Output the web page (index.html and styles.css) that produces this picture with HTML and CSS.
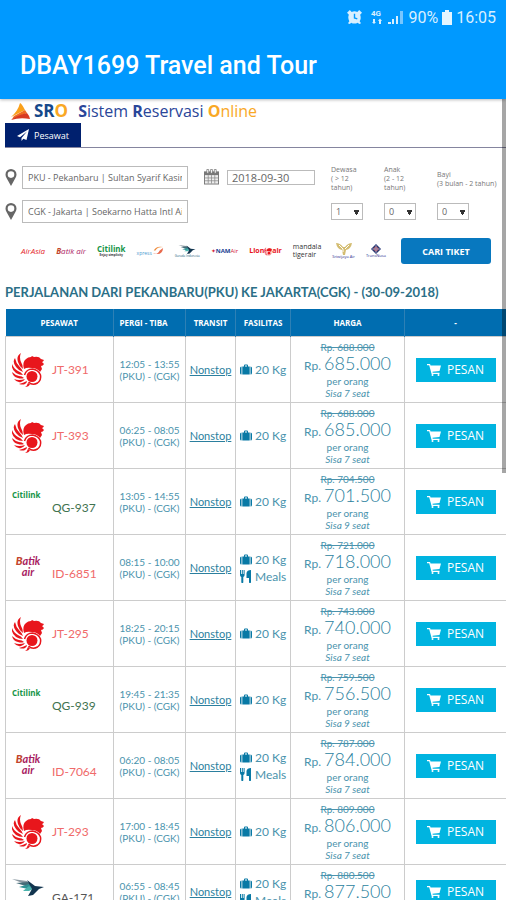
FILE: index.html
```html
<!DOCTYPE html>
<html lang="id">
<head>
  <meta charset="UTF-8">
  <meta name="viewport" content="width=device-width, initial-scale=1">
  <title>DBAY1699 Travel and Tour</title>
  <link rel="stylesheet" href="styles.css">
</head>
<body>
  <svg class="sprite" aria-hidden="true">
    <symbol id="plane" viewBox="0 0 12 12"><path d="M12 0L0 7l3 1.300L10 2.500 4.500 9v3l1.800-2.300L9.500 11z"/></symbol>
    <symbol id="pin" viewBox="0 0 12 17"><path fill-rule="evenodd" d="M6 0a5.500 5.500 0 0 0-5.500 5.500C.5 8 2 9.500 3.500 12.500L6 17l2.500-4.500C10 9.500 11.500 8 11.500 5.500A5.500 5.500 0 0 0 6 0zM6 2.300a3.300 3.300 0 1 1 0 6.600 3.300 3.300 0 0 1 0-6.600z"/></symbol>
    <symbol id="bag" viewBox="0 0 12 10"><path d="M0 3.500Q0 2 1.500 2v8Q0 10 0 8.500zM2.300 2H4V1q0-1 1-1h2q1 0 1 1v1h1.700v8H2.300zM5 1v1h2V1zM10.500 2Q12 2 12 3.500v5q0 1.500-1.500 1.500z"/></symbol>
    <symbol id="meal" viewBox="0 0 12 13"><path d="M0 0h1v4h.8V0h1v4h.8V0h1v5Q4.600 6.500 3.300 7v5.500q-1 1-2 0V7Q0 6.500 0 5zM11 0v12.500q-1 1-2 0V8H6.500V3Q7 0 11 0z"/></symbol>
    <symbol id="cart" viewBox="0 0 14 12"><path d="M0 0h3l.6 1.600H14L12.500 7 5.500 7.800l.2.900h6.800v1.200H4.600L2.200 1.300H0z"/><circle cx="5.500" cy="11" r="1"/><circle cx="11.500" cy="11" r="1"/></symbol>
    <symbol id="lion" viewBox="0 0 32 34">
      <path d="M9 0Q4 3 6 9q1 4 5 7 0-4-2-7-2-5 0-9zM3 5Q0 9 4 14q3 4 7 5-1-3-4-6-3-3-4-8zM0 11q-1 5 4 9 3 2 7 2-2-3-5-4-4-2-6-7zM0 19q1 5 6 6 3 1 6 0-2-2-5-2-4-1-7-4zM2 26q3 4 7 3 3-1 4-3-6 2-11 0zM7 31q4 1 6 0 2-1 2-3-4 2-8 3zM13 34q4 0 5-3l-2-1q-1 3-3 4z"/>
      <path d="M12 16q-2-7 2-10 2-2 5-2l1-1 2 1q5-1 7 2l3 1q-1 2-2 2l2 2q-1 2-3 2l1 3-2 3q-3-4-8-4-5-1-8 1z"/>
      <circle cx="20" cy="23.500" r="5.500"/>
      <path fill="none" stroke="#e8161c" stroke-width="1.500" d="M12.500 22q2-6 8-6 6 1 8 6 1 5-3 8-5 3-9-1"/>
    </symbol>
    <symbol id="garuda" viewBox="0 0 32 17">
      <path fill="#8c9aa3" d="M0 0l15 2 5 4-2 1z"/><path fill="#456c78" d="M4 4l12-1 4 4-3 1z"/><path fill="#2f9295" d="M7 8l10-3 3 4-4 1z"/><path fill="#49b3ad" d="M11 12l6-5 4 3-4 2z"/><path fill="#12354f" d="M15 1l8 6 9 1-5 2-6 6-5 1 4-7z"/>
    </symbol>
  </svg>

  <div class="screen">
    <header class="app-bar">
      <div class="status">
        <svg class="alarm" viewBox="0 0 16 16"><path d="M0 3l3-3 2 2q3-1.500 6 0l2-2 3 3-2 2q1.500 4-.5 7l1.500 2-2 1-1.500-1.500q-4 2-7 0L3 15l-2-1 1.500-2Q.5 8 2 5z" fill="#d8efff"/><path d="M8 4v4.500l3 1" fill="none" stroke="#0099ff" stroke-width="1.500"/></svg>
        <svg class="network" viewBox="0 0 14 16"><text x="1" y="7">4G</text><path d="M3 10h2v3H3zM2 13h4l-2 2zM8 12h4l-2-2.500zM9 12h2v3H9z" fill="#d8efff"/></svg>
        <svg class="signal" viewBox="0 0 16 14"><path d="M0 12h3v2H0zM4 9h2v5H4zM8 6h2v8H8z" fill="#d8efff"/><path d="M12 1h3v13h-3z" fill="#77c7ff"/></svg>
        <span>90%</span>
        <svg class="battery" viewBox="0 0 10 15"><path d="M3 0h4v2h3v13H0V2h3z" fill="#e5f5ff"/></svg>
        <span>16:05</span>
      </div>
      <h1>DBAY1699 Travel and Tour</h1>
    </header>

    <main>
      <div class="brand">
        <svg class="brand-mark" viewBox="0 0 19 17"><path fill="#f9a01b" d="M9 0q2 1 5 7L0 14Q7 8 9 0z"/><path fill="#ef6b22" d="M14 7l2 3L1 16l2-3z"/><path fill="#d83a23" d="M16 10q2 2 3 6Q9 14 0 17q4-4 16-7z"/></svg>
        <span class="sro">SR<i>O</i></span>
        <span class="slogan"><b>S</b>istem <b>R</b>eservasi <em><b>O</b>nline</em></span>
      </div>
      <nav class="tabs"><a href="#"><svg><use href="#plane"/></svg>Pesawat</a></nav>

      <form class="search">
        <div class="places">
          <div class="place"><svg><use href="#pin"/></svg><input type="text" aria-label="Asal" value="PKU - Pekanbaru | Sultan Syarif Kasim II"></div>
          <div class="place"><svg><use href="#pin"/></svg><input type="text" aria-label="Tujuan" value="CGK - Jakarta | Soekarno Hatta Intl Airport"></div>
        </div>
        <div class="date">
          <svg viewBox="0 0 16 16"><path d="M0 2h16v14H0z" fill="#777"/><path d="M1 6h14v9H1z" fill="#eee"/><path d="M3 0h2v4H3zM7 0h2v4H7zM11 0h2v4h-2z" fill="#fff" stroke="#666" stroke-width=".7"/><path d="M1 9h14M1 12h14M4.500 6v9M8 6v9M11.500 6v9" stroke="#888" stroke-width=".8"/></svg>
          <input type="text" aria-label="Tanggal" value="2018-09-30">
        </div>
        <div class="guests">
          <div class="guest"><label for="adult"><span>Dewasa<br>( &gt; 12<br>tahun)</span></label><select id="adult"><option>1</option><option>2</option></select></div>
          <div class="guest"><label for="child"><span>Anak<br>(2 - 12<br>tahun)</span></label><select id="child"><option>0</option><option>1</option></select></div>
          <div class="guest"><label for="infant"><span>Bayi<br>(3 bulan - 2 tahun)</span></label><select id="infant"><option>0</option><option>1</option></select></div>
        </div>
      </form>

      <div class="partners">
        <div class="airlines">
          <span class="air-asia">AirAsia</span>
          <span class="air-batik"><b>B</b>atik air</span>
          <span class="air-citilink">Citilink<small>Enjoy simplicity</small></span>
          <span class="air-xpress">xpress<svg viewBox="0 0 14 10"><path d="M2 5Q5-1 13 1 6 1 4 5z" fill="#ef8b3b"/><path d="M1 8q5 3 8-3l4-3q-1 8-8 7z" fill="#e86a4d"/></svg></span>
          <span class="air-garuda"><svg><use href="#garuda"/></svg><small>Garuda Indonesia</small></span>
          <span class="air-nam">✦<b>NAM</b>Air</span>
          <span class="air-lion">Lion<svg><use href="#lion"/></svg>air</span>
          <span class="air-mandala">mandala<br>tigerair</span>
          <span class="air-sriwijaya"><svg viewBox="0 0 16 12"><path d="M0 0q4 0 7 4h2q3-4 7-4-1 6-6 7l-1 5H7L6 7Q1 6 0 0z" fill="#d4bd72"/><path d="M3 2l4 4v3M13 2L9 6" stroke="#fff" fill="none"/></svg><small>Sriwijaya Air</small></span>
          <span class="air-nusa"><svg viewBox="0 0 10 10"><path d="M5 0l5 5-5 5-5-5z" fill="#25356f"/><path d="M5 2l3 3-3 3-3-3z" fill="#d96262"/><path d="M5 0v10M0 5h10" stroke="#8790b8"/></svg><small>TransNusa</small></span>
        </div>
        <button type="button" class="find">CARI TIKET</button>
      </div>

      <h2>PERJALANAN DARI PEKANBARU(PKU) KE JAKARTA(CGK) - (30-09-2018)</h2>

      <table>
        <colgroup><col class="c-plane"><col class="c-time"><col class="c-transit"><col class="c-extra"><col class="c-price"><col class="c-book"></colgroup>
        <thead>
          <tr><th>PESAWAT</th><th class="th-time">PERGI - TIBA</th><th>TRANSIT</th><th>FASILITAS</th><th>HARGA</th><th>-</th></tr>
        </thead>
        <tbody id="flights"></tbody>
      </table>
    </main>
    <div class="scrollbar"></div>
  </div>

  <script>
    const flights = [
      ['lion', 'JT-391', '12:05 - 13:55', false, '688.000', '685.000', 7],
      ['lion', 'JT-393', '06:25 - 08:05', false, '688.000', '685.000', 7],
      ['citilink', 'QG-937', '13:05 - 14:55', false, '704.500', '701.500', 9],
      ['batik', 'ID-6851', '08:15 - 10:00', true, '721.000', '718.000', 7],
      ['lion', 'JT-295', '18:25 - 20:15', false, '743.000', '740.000', 7],
      ['citilink', 'QG-939', '19:45 - 21:35', false, '759.500', '756.500', 9],
      ['batik', 'ID-7064', '06:20 - 08:05', true, '787.000', '784.000', 7],
      ['lion', 'JT-293', '17:00 - 18:45', false, '809.000', '806.000', 7],
      ['garuda', 'GA-171', '06:55 - 08:45', true, '880.500', '877.500', 0]
    ];

    const logos = {
      lion: '<svg><use href="#lion"/></svg>',
      garuda: '<svg><use href="#garuda"/></svg>',
      citilink: 'Citilink',
      batik: '<b>B</b>atik<br>air'
    };

    document.getElementById('flights').innerHTML = flights.map(([line, code, time, meals, old, price, seats]) => `
      <tr>
        <td><div class="flight ${line}"><span class="logo">${logos[line]}</span><span class="code">${code}</span></div></td>
        <td class="time">${time}<br>(PKU) - (CGK)</td>
        <td class="transit"><a href="#">Nonstop</a></td>
        <td class="extra"><div><svg><use href="#bag"/></svg>20 Kg</div>${meals ? '<div><svg><use href="#meal"/></svg>Meals</div>' : ''}</td>
        <td class="price"><s>Rp. ${old}</s><div class="now">Rp. <strong>${price}</strong></div><div>per orang</div>${seats ? `<div><i>Sisa ${seats} seat</i></div>` : ''}</td>
        <td class="book"><button type="button"><svg><use href="#cart"/></svg>PESAN</button></td>
      </tr>`).join('');
  </script>
</body>
</html>
```
FILE: styles.css
```css
* {
  box-sizing: border-box;
}

body {
  margin: 0;
  background: #fff;
  font-family: Lato, sans-serif;
}

.sprite {
  display: none;
}

.screen {
  position: relative;
  height: 100vh;
  overflow: hidden;
}

/* app bar */
.app-bar {
  height: 99px;
  background: #0099ff;
  color: #fff;
  font-family: Roboto, sans-serif;
  box-shadow: 0 1px 3px #bbb;
}

.status {
  display: flex;
  justify-content: flex-end;
  align-items: center;
  gap: 4px;
  height: 32px;
  padding: 2px 10px 0 0;
  font-size: 16px;
  color: #d8efff;
}

.alarm {
  width: 15px;
  height: 15px;
  margin-right: 4px;
}

.network {
  width: 14px;
  height: 16px;
}

.network text {
  font: bold 8px Roboto, sans-serif;
  fill: #d8efff;
}

.signal {
  width: 16px;
  height: 14px;
}

.battery {
  width: 10px;
  height: 15px;
}

h1 {
  margin: 0;
  padding: 20px 20px 0;
  font-size: 25px;
  font-weight: 500;
  line-height: 28px;
}

/* logo and tabs */
.brand {
  display: flex;
  align-items: center;
  height: 24px;
  padding-left: 11px;
  font-family: "Open Sans", sans-serif;
  line-height: 20px;
  color: #2a4699;
}

.brand-mark {
  width: 19px;
  height: 17px;
}

.sro {
  margin: 0 10px 0 4px;
  font-size: 17px;
  font-weight: bold;
  color: #15488a;
}

.sro i,
.slogan em {
  font-style: normal;
  color: #f9a825;
}

.slogan {
  font-size: 16px;
}

.tabs {
  display: flex;
  margin-left: 5px;
  border-bottom: 1px solid #85859f;
}

.tabs a {
  display: flex;
  align-items: center;
  gap: 5px;
  width: 76px;
  height: 24px;
  padding-left: 12px;
  background: #00206e;
  color: #fff;
  font: 9px "Open Sans", sans-serif;
  text-decoration: none;
}

.tabs svg {
  width: 12px;
  height: 12px;
  fill: #fff;
}

/* search form */
.search {
  display: flex;
  padding: 16px 0 0 5px;
  font-family: "Open Sans", sans-serif;
  color: #777;
}

.search input,
.search select {
  border: 1px solid #bbb;
  border-radius: 0;
  background: #fff;
  color: #666;
  font-family: inherit;
}

.places {
  flex: 1 1 183px;
  min-width: 0;
}

.place {
  display: flex;
  align-items: center;
  gap: 5px;
  margin: 2px 0 11px;
}

.place svg {
  width: 12px;
  height: 17px;
  fill: #666;
}

.place input {
  flex: 1;
  min-width: 0;
  height: 23px;
  padding: 0 5px;
  font-size: 9px;
}

.date {
  display: flex;
  flex: 1 1 111px;
  align-items: center;
  align-self: flex-start;
  gap: 8px;
  min-width: 0;
  margin: 5px 16px 0;
}

.date svg {
  width: 15px;
  height: 16px;
}

.date input {
  flex: 1;
  min-width: 0;
  height: 15px;
  padding: 0 4px;
  font-size: 11px;
}

.guests {
  display: flex;
  flex: 0 0 175px;
}

.guest {
  width: 53px;
}

.guest label {
  display: flex;
  align-items: center;
  height: 29px;
  margin-bottom: 10px;
  font-size: 7px;
  line-height: 9px;
  white-space: nowrap;
}

.search select {
  display: block;
  width: 32px;
  height: 17px;
  padding: 0 4px;
  font-size: 9px;
  appearance: none;
  background: conic-gradient(from -35deg at 50% 100%, #333 70deg, transparent 0) no-repeat 22px 6px / 5px 5px;
}

/* partner strip */
.partners {
  display: flex;
  align-items: center;
  justify-content: space-between;
  padding: 4px 15px 0 21px;
}

.airlines {
  display: flex;
  align-items: center;
  gap: 11px;
  height: 26px;
  font: 7px/8px "Open Sans", sans-serif;
}

.airlines > span {
  flex: none;
  white-space: nowrap;
}

.airlines small {
  display: block;
  font-size: 3px;
  line-height: 4px;
  text-align: center;
}

.air-asia {
  color: #e5261f;
  font-size: 8px;
  font-style: italic;
}

.air-batik {
  color: #ad1e66;
  font-size: 8px;
  font-style: italic;
}

.air-citilink {
  color: #159447;
  font-size: 8px;
  font-weight: bold;
}

.air-citilink small {
  color: #333;
}

.air-xpress {
  color: #4c9bd0;
  font-size: 5px;
}

.air-xpress svg {
  width: 12px;
  height: 9px;
}

.air-garuda svg {
  display: block;
  width: 18px;
  height: 9px;
  margin: 0 auto;
}

.air-garuda small {
  color: #25617d;
}

.air-nam {
  color: #d3263c;
  font-size: 6px;
}

.air-nam b {
  color: #173f91;
}

.air-lion {
  color: #e8161c;
  font-weight: bold;
}

.air-lion svg {
  width: 8px;
  height: 9px;
  fill: #e8161c;
  vertical-align: middle;
}

.air-mandala {
  color: #333;
}

.air-sriwijaya svg {
  display: block;
  width: 16px;
  height: 12px;
  margin: 0 auto;
}

.airlines .air-sriwijaya small,
.airlines .air-nusa small {
  color: #2b2f91;
  font-size: 4px;
}

.air-nusa svg {
  display: block;
  width: 10px;
  height: 10px;
  margin: 0 auto;
}

.find {
  width: 90px;
  height: 26px;
  border: 0;
  border-radius: 3px;
  background: #0878bf;
  color: #fff;
  font: bold 9px "Open Sans", sans-serif;
}

h2 {
  margin: 19px 0 8px 5px;
  color: #2b6f87;
  font-size: 13px;
  font-weight: bold;
  line-height: 18px;
  white-space: nowrap;
}

/* flight list */
table {
  width: calc(100% - 5px);
  margin-left: 5px;
  border-collapse: collapse;
  table-layout: fixed;
  color: #2b7f9e;
}

.c-plane { width: 108px; }
.c-time { width: 72px; }
.c-transit { width: 50px; }
.c-extra { width: 55px; }
.c-price { width: 114px; }
.c-book { width: 102px; }

th {
  height: 27px;
  padding: 0;
  border-right: 1px solid #2d80b5;
  background: #006db0;
  color: #fff;
  font: bold 8px "Open Sans", sans-serif;
}

.th-time {
  padding-right: 12px;
}

td {
  padding: 4px 0 3px;
  border: 1px solid #ccc;
}

.flight {
  display: flex;
  align-items: center;
  gap: 8px;
  padding-left: 6px;
  font-size: 12px;
}

.logo {
  flex: none;
  width: 32px;
}

.logo svg {
  display: block;
  width: 32px;
  height: 34px;
}

.lion {
  color: #f06a6a;
  fill: #e8161c;
}

.citilink,
.batik,
.garuda {
  align-items: flex-start;
}

.citilink .code,
.batik .code,
.garuda .code {
  padding-top: 11px;
}

.citilink {
  color: #3f7350;
}

.citilink .logo {
  color: #159447;
  font: bold 8px "Open Sans", sans-serif;
}

.batik {
  color: #f06a6a;
}

.batik .logo {
  color: #a81c62;
  font: italic bold 11px/11px Lato, sans-serif;
  text-align: center;
}

.batik .logo b,
.air-batik b {
  color: #c2452d;
}

.garuda {
  color: #555;
}

.garuda .logo svg {
  height: 17px;
}

.time {
  font-size: 10px;
  line-height: 12px;
  text-align: center;
  color: #4a93ad;
}

.transit {
  font-size: 11px;
  text-align: center;
}

.transit a {
  color: #2b7f9e;
}

.extra {
  padding-left: 4px;
  font-size: 12px;
  line-height: 17px;
  color: #4a93ad;
}

.extra div {
  display: flex;
  align-items: center;
  gap: 3px;
}

.extra svg {
  width: 12px;
  height: 13px;
  fill: #0879a5;
}

.price {
  font-size: 10px;
  line-height: 12px;
  text-align: center;
  color: #4a93ad;
}

.price s {
  display: block;
}

.now {
  height: 22px;
  font-size: 12px;
  line-height: 20px;
}

.now strong {
  color: #2b7f9e;
  font-size: 18px;
  font-weight: 300;
}

.book {
  text-align: center;
}

.book button {
  display: inline-flex;
  align-items: center;
  justify-content: center;
  gap: 6px;
  width: 80px;
  height: 24px;
  padding: 0;
  border: 0;
  background: #00b4e0;
  color: #fff;
  font: 12px "Open Sans", sans-serif;
}

.book svg {
  width: 14px;
  height: 12px;
  fill: #fff;
}

.scrollbar {
  position: absolute;
  top: 99px;
  right: 0;
  width: 4px;
  height: 374px;
  background: rgba(0, 0, 0, 0.35);
}
```
